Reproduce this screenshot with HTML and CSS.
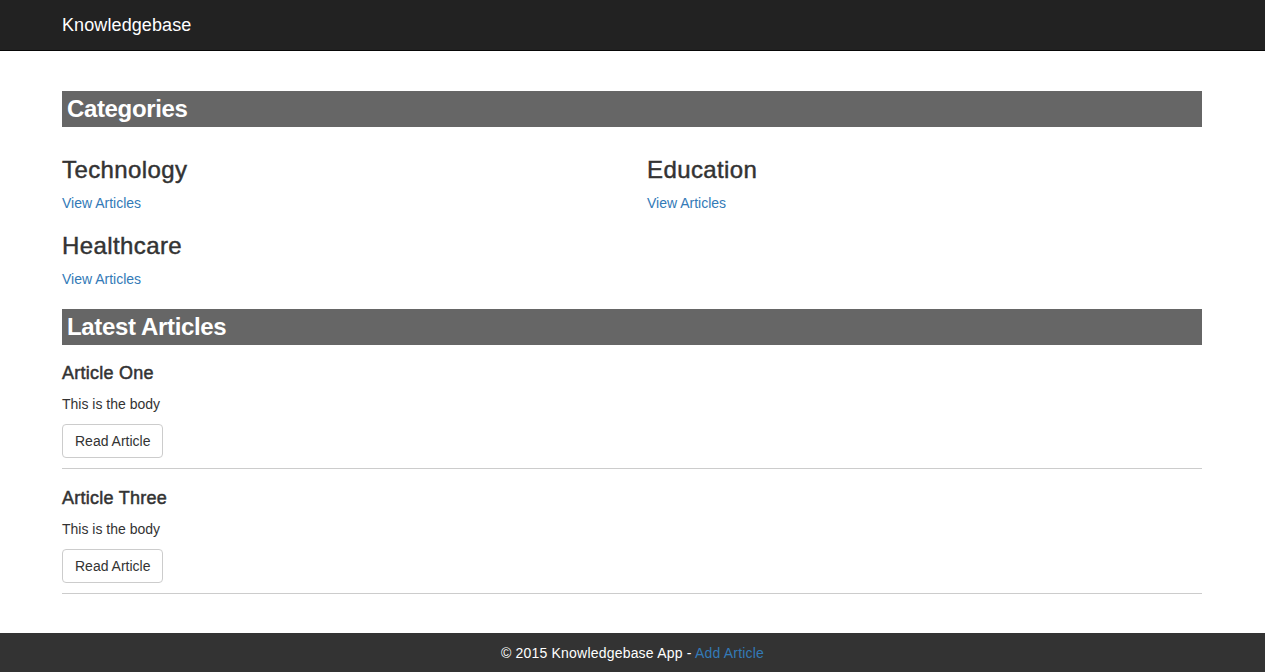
FILE: index.html
```html
<!DOCTYPE html>
<html lang="en">
<head>
<meta charset="utf-8">
<title>Knowledgebase</title>
<link rel="stylesheet" href="styles.css">
</head>
<body>
<nav class="navbar">
  <div class="container">
    <a class="brand" href="#">Knowledgebase</a>
  </div>
</nav>
<main class="container main">
  <h3 class="section-title">Categories</h3>
  <div class="categories">
    <div class="category">
      <h3>Technology</h3>
      <a href="#">View Articles</a>
    </div>
    <div class="category">
      <h3>Education</h3>
      <a href="#">View Articles</a>
    </div>
    <div class="category">
      <h3>Healthcare</h3>
      <a href="#">View Articles</a>
    </div>
  </div>
  <h3 class="section-title latest">Latest Articles</h3>
  <div class="articles">
    <div class="article">
      <h4>Article One</h4>
      <p>This is the body</p>
      <a class="btn" href="#">Read Article</a>
    </div>
    <div class="article">
      <h4>Article Three</h4>
      <p>This is the body</p>
      <a class="btn" href="#">Read Article</a>
    </div>
  </div>
</main>
<footer class="footer">
  &copy; 2015 Knowledgebase App - <a href="#">Add Article</a>
</footer>
</body>
</html>
```
FILE: styles.css
```css
* { box-sizing: border-box; }
html, body { height: 100%; }
body {
  margin: 0;
  font-family: "Liberation Sans", Arial, Helvetica, sans-serif;
  font-size: 14px;
  line-height: 20px;
  color: #333;
  background: #fff;
  display: flex;
  flex-direction: column;
  min-height: 100vh;
}
a { color: #337ab7; text-decoration: none; }
.container {
  width: 1140px;
  margin-left: calc((100% - 1141px) / 2);
}

.navbar {
  background: #222;
  border-bottom: 1px solid #080808;
  height: 51px;
}
.brand {
  display: block;
  color: #fff;
  font-size: 18px;
  line-height: 20px;
  padding: 15px 0;
  letter-spacing: 0.1px;
}

.main { flex: 1; padding-top: 40px; }

.section-title {
  background: #666;
  color: #fff;
  font-size: 24px;
  font-weight: bold;
  line-height: 26px;
  padding: 5px;
  margin: 0 0 10px;
  letter-spacing: -0.35px;
}
.section-title.latest { margin-top: 20px; }

.categories {
  display: grid;
  grid-template-columns: 1fr 1fr;
  column-gap: 30px;
}
.category h3 {
  font-size: 24px;
  font-weight: normal;
  line-height: 26px;
  margin: 20px 0 10px;
  letter-spacing: 0.4px;
  -webkit-text-stroke: 0.45px #333;
}
.category a { display: block; }

.articles { display: flow-root; }
.article {
  border-bottom: 1px solid #ccc;
  padding-bottom: 10px;
}
.article h4 {
  font-size: 18px;
  font-weight: normal;
  line-height: 19.8px;
  margin: 20px 0 10px;
  letter-spacing: 0.25px;
  -webkit-text-stroke: 0.5px #333;
}
.article:first-child h4 { margin-top: 9px; }
.article p { margin: 0 0 10px; }
.btn {
  display: inline-block;
  padding: 6px 12px;
  border: 1px solid #ccc;
  border-radius: 4px;
  color: #333;
  background: #fff;
  font-size: 14px;
  line-height: 20px;
  vertical-align: top;
}

.footer {
  background: #333;
  color: #fff;
  text-align: center;
  padding: 10px 0 9px;
  line-height: 20px;
  letter-spacing: 0.2px;
}
```
